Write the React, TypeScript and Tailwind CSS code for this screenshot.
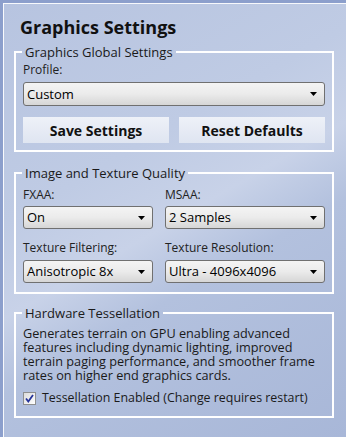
import React from "react";

const font = { fontFamily: '"Open Sans", "DejaVu Sans", sans-serif' };

function Caret() {
  return (
    <svg width="7" height="4" viewBox="0 0 7 4" className="shrink-0">
      <path d="M0 0h7L3.5 4z" fill="#000" />
    </svg>
  );
}

function Select({ value, className = "" }: { value: string; className?: string }) {
  return (
    <div
      className={`flex items-center justify-between rounded-[3px] border border-[#707070] bg-gradient-to-b from-[#f4f4f4] via-[#ebebeb] to-[#d6d6d6] pl-[3px] pr-[7px] text-[13px] text-black ${className}`}
    >
      <span className="leading-none">{value}</span>
      <Caret />
    </div>
  );
}

function Group({ title, children, className = "" }: { title: string; children: React.ReactNode; className?: string }) {
  return (
    <fieldset className={`ml-[10px] mr-[12px] rounded-none border-2 border-white px-[7px] ${className}`}>
      <legend className="-ml-px px-[3px] text-[13px] leading-[16px] text-[#1a1a1a]">{title}</legend>
      {children}
    </fieldset>
  );
}

const label = "text-[12px] leading-[16px] text-[#222]";

export default function App() {
  return (
    <div
      style={font}
      className="h-[437px] w-[346px] overflow-hidden border-l-[3px] border-t-[3px] border-[#8c9fcc] bg-[#b3c1de]"
    >
      <div className="h-full border-l border-t border-white/90 bg-[linear-gradient(150deg,#b7c4e0_0%,#bfcbe4_35%,#c8d2e8_50%,#b3c1de_62%,#a8b7d8_100%)]">
        <h1 className="pl-[16px] pt-[11px] text-[18px] font-bold leading-[24px] text-[#111]">Graphics Settings</h1>

        <Group title="Graphics Global Settings" className="mt-[5px] pb-[7px]">
          <div className={`mt-[2px] ${label}`}>Profile:</div>
          <Select value="Custom" className="mt-[4px] h-[24px]" />
          <div className="mt-[11px] flex gap-[10px]">
            <button className="h-[26px] flex-1 bg-gradient-to-b from-[#eef1f8] to-[#dfe5f1] text-[14px] font-bold text-[#111]">
              Save Settings
            </button>
            <button className="h-[26px] flex-1 bg-gradient-to-b from-[#eef1f8] to-[#dfe5f1] text-[14px] font-bold text-[#111]">
              Reset Defaults
            </button>
          </div>
        </Group>

        <Group title="Image and Texture Quality" className="mt-[13px] pb-[9px]">
          <div className="grid grid-cols-[130px_1fr] gap-x-[12px]">
            <div className={`mt-[6px] ${label}`}>FXAA:</div>
            <div className={`mt-[6px] ${label}`}>MSAA:</div>
            <Select value="On" className="mt-[3px] h-[23px]" />
            <Select value="2 Samples" className="mt-[3px] h-[23px]" />
            <div className={`mt-[11px] ${label}`}>Texture Filtering:</div>
            <div className={`mt-[11px] ${label}`}>Texture Resolution:</div>
            <Select value="Anisotropic 8x" className="mt-[4px] h-[23px]" />
            <Select value="Ultra - 4096x4096" className="mt-[4px] h-[23px]" />
          </div>
        </Group>

        <Group title="Hardware Tessellation" className="mt-[11px] pb-[10px]">
          <p className="mt-[5px] text-[12.7px] leading-[14px] text-[#1a1a1a]">
            Generates terrain on GPU enabling advanced features including dynamic lighting, improved terrain paging
            performance, and smoother frame rates on higher end graphics cards.
          </p>
          <label className="mt-[8px] flex items-center gap-[6px] text-[12.4px] leading-[16px] text-[#1a1a1a]">
            <span className="flex h-[13px] w-[13px] items-center justify-center border border-[#8e8f8f] bg-gradient-to-br from-[#dcdcdc] to-white">
              <svg width="9" height="9" viewBox="0 0 9 9">
                <path d="M1 4.5l2.3 3L8 1" fill="none" stroke="#26349a" strokeWidth="1.8" />
              </svg>
            </span>
            Tessellation Enabled (Change requires restart)
          </label>
        </Group>
      </div>
    </div>
  );
}
